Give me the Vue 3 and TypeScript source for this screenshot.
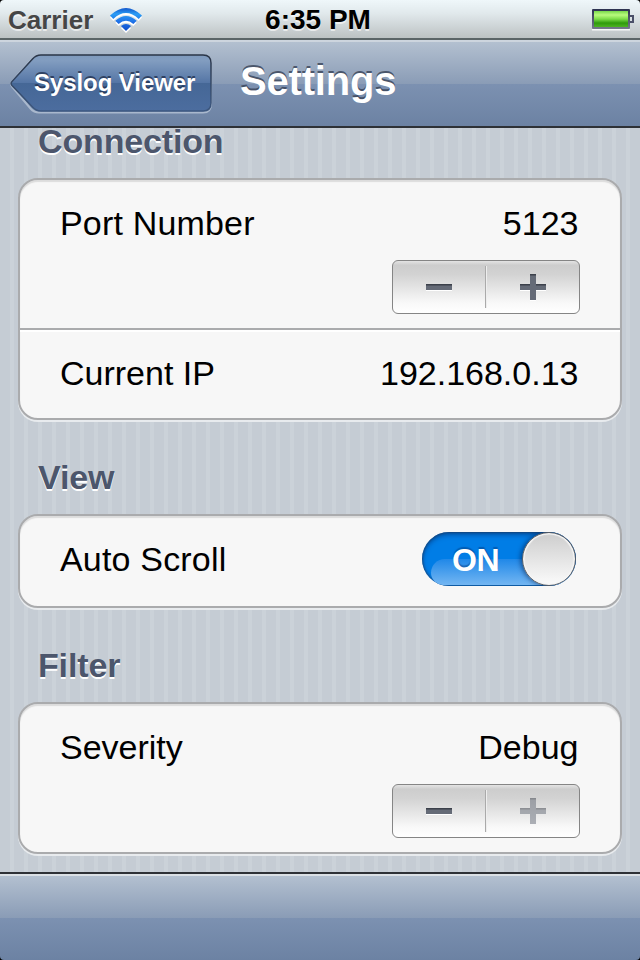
<script setup lang="ts">
import { ref } from 'vue'

const severities = ['Emergency', 'Alert', 'Critical', 'Error', 'Warning', 'Notice', 'Info', 'Debug']
const port = ref<number>(5123)
const severity = ref<number>(severities.length - 1)
const autoScroll = ref<boolean>(true)
const currentIp = '192.168.0.13'

function stepSeverity(delta: number): void {
  severity.value = Math.min(severities.length - 1, Math.max(0, severity.value + delta))
}
</script>

<template>
  <div class="screen">
    <header class="status">
      <div class="status-left">
        <span class="carrier">Carrier</span>
        <svg class="wifi" width="34" height="26" viewBox="0 0 34 26">
          <defs>
            <linearGradient id="wifi-fill" gradientUnits="userSpaceOnUse" x1="0" y1="0" x2="0" y2="24">
              <stop offset="0" stop-color="#1256cc" />
              <stop offset="0.25" stop-color="#2c9df4" />
              <stop offset="0.6" stop-color="#1d6ee6" />
              <stop offset="1" stop-color="#0c49c4" />
            </linearGradient>
          </defs>
          <g fill="#fff" transform="translate(0 2)">
            <path d="M1 7.6Q17-7.6 33 7.6L29.7 10.9Q17-.8 4.3 10.9Z" />
            <path d="M6.3 12.7Q17 3.3 27.7 12.7L24.4 16.1Q17 9.6 9.6 16.1Z" />
            <path d="M11.9 18Q17 13.8 22.1 18L17 23Z" />
          </g>
          <g fill="url(#wifi-fill)">
            <path d="M1 7.6Q17-7.6 33 7.6L29.7 10.9Q17-.8 4.3 10.9Z" />
            <path d="M6.3 12.7Q17 3.3 27.7 12.7L24.4 16.1Q17 9.6 9.6 16.1Z" />
            <path d="M11.9 18Q17 13.8 22.1 18L17 23Z" />
          </g>
        </svg>
      </div>
      <span class="clock">6:35 PM</span>
      <div class="status-right">
        <svg width="43" height="23" viewBox="0 0 43 23">
          <defs>
            <linearGradient id="charge" x1="0" y1="0" x2="0" y2="1">
              <stop offset="0" stop-color="#78d94a" />
              <stop offset="0.25" stop-color="#b9fb7e" />
              <stop offset="0.5" stop-color="#7ddd48" />
              <stop offset="0.75" stop-color="#2f9a0c" />
              <stop offset="1" stop-color="#4db322" />
            </linearGradient>
            <linearGradient id="shell" x1="0" y1="0" x2="0" y2="1">
              <stop offset="0" stop-color="#2c3150" />
              <stop offset="1" stop-color="#75798a" />
            </linearGradient>
          </defs>
          <path d="M0 20h38v1.5H0z" fill="#fff" fill-opacity=".85" />
          <rect width="38" height="20" rx="1" fill="url(#shell)" />
          <rect x="2" y="2" width="34" height="16" fill="url(#charge)" />
          <path d="M38 7h3v6h-3" fill="none" stroke="#4a4f68" stroke-width="2" />
        </svg>
      </div>
    </header>

    <nav class="navbar">
      <button class="back" type="button">
        <svg class="back-shape" width="204" height="62" viewBox="0 0 204 62">
          <defs>
            <linearGradient id="back-fill" x1="0" y1="0" x2="0" y2="1">
              <stop offset="0" stop-color="#7e99bd" />
              <stop offset="0.1" stop-color="#829dc0" />
              <stop offset="0.5" stop-color="#5475a5" />
              <stop offset="0.5" stop-color="#456796" />
              <stop offset="1" stop-color="#4c6d9f" />
            </linearGradient>
            <linearGradient id="back-line" x1="0" y1="0" x2="0" y2="1">
              <stop offset="0" stop-color="#2a3547" />
              <stop offset="1" stop-color="#3d5880" />
            </linearGradient>
          </defs>
          <path d="M27 2.5H193Q201 2.5 201 10.5V50.5Q201 58.5 193 58.5H29Q24 58.5 20.5 54.5L2 32.5Q0 30 2 27.5L20.5 6.5Q24 2.5 29 2.5Z" fill="none" stroke="#a9b8cd" stroke-width="2" />
          <path d="M31 1H193Q201 1 201 9V49Q201 57 193 57H31Q26 57 22.5 53L2 31.5Q.2 29.5 2 27.5L22.5 5Q26 1 31 1Z" fill="url(#back-fill)" stroke="url(#back-line)" stroke-width="1.5" />
        </svg>
        <span class="back-label">Syslog Viewer</span>
      </button>
      <h1 class="title">Settings</h1>
    </nav>

    <main class="content">
      <section class="group">
        <h2>Connection</h2>
        <div class="card">
          <div class="row tall">
            <div class="line"><span class="wide">Port Number</span><span>{{ port }}</span></div>
            <div class="stepper">
              <button type="button" @click="port--">
                <svg width="26" height="28"><path d="M0 12h26v5H0z" fill="#fff" /><path d="M0 10h26v6H0z" fill="#656b77" /><path d="M0 10h26v1.5H0z" fill="#3c414b" /></svg>
              </button>
              <button type="button" @click="port++">
                <svg width="26" height="28"><path d="M0 12h26v5H16v10h-6V17H0z" fill="#fff" /><path d="M10 0h6v10h10v6H16v10h-6V16H0v-6h10z" fill="#656b77" /><path d="M10 0h6v1.5h-6zM0 10h10v1.5H0zM16 10h10v1.5H16z" fill="#3c414b" /></svg>
              </button>
            </div>
          </div>
          <div class="row">
            <div class="line"><span>Current IP</span><span>{{ currentIp }}</span></div>
          </div>
        </div>
      </section>

      <section class="group">
        <h2>View</h2>
        <div class="card">
          <div class="row switch-row">
            <span class="wide">Auto Scroll</span>
            <button class="switch" type="button" @click="autoScroll = !autoScroll">
              <span class="gloss"></span>
              <span class="switch-label">{{ autoScroll ? 'ON' : 'OFF' }}</span>
              <span class="knob"></span>
            </button>
          </div>
        </div>
      </section>

      <section class="group">
        <h2>Filter</h2>
        <div class="card">
          <div class="row tall">
            <div class="line"><span>Severity</span><span>{{ severities[severity] }}</span></div>
            <div class="stepper">
              <button type="button" @click="stepSeverity(-1)">
                <svg width="26" height="28"><path d="M0 12h26v5H0z" fill="#fff" /><path d="M0 10h26v6H0z" fill="#656b77" /><path d="M0 10h26v1.5H0z" fill="#3c414b" /></svg>
              </button>
              <button type="button" :disabled="severity === severities.length - 1" @click="stepSeverity(1)">
                <svg width="26" height="28"><path d="M10 0h6v10h10v6H16v10h-6V16H0v-6h10z" fill="#656b77" /><path d="M10 0h6v1.5h-6zM0 10h10v1.5H0zM16 10h10v1.5H16z" fill="#3c414b" /></svg>
              </button>
            </div>
          </div>
        </div>
      </section>
    </main>

    <footer class="toolbar"></footer>
  </div>
</template>

<style>
body {
  background: #000;
}
</style>

<style scoped>
.screen {
  box-sizing: border-box;
  width: 640px;
  height: 960px;
  display: flex;
  flex-direction: column;
  overflow: hidden;
  border-radius: 4px;
  font-family: "Liberation Sans", Arial, sans-serif;
  color: #000;
}
button {
  padding: 0;
  margin: 0;
  border: 0;
  background: none;
  font-family: inherit;
}
.status {
  box-sizing: border-box;
  height: 40px;
  flex: none;
  display: grid;
  grid-template-columns: 1fr auto 1fr;
  padding: 0 5px 0 8px;
  background: linear-gradient(#eff7fa, #e1e9ec 35%, #bcc2c3 100%);
  border-bottom: 2px solid #5b6567;
}
.status-left {
  display: flex;
  gap: 16px;
}
.carrier {
  font: bold 26px/40px "Liberation Sans", Arial, sans-serif;
  color: #464646;
  text-shadow: 0 2px 0 rgba(255, 255, 255, 0.6);
}
.wifi {
  margin-top: 8px;
}
.clock {
  margin-right: 7px;
  font-size: 28px;
  font-weight: bold;
  line-height: 39px;
  text-shadow: 0 2px 0 rgba(255, 255, 255, 0.6);
}
.status-right {
  display: flex;
  justify-content: flex-end;
  padding-top: 9px;
}
.navbar {
  box-sizing: border-box;
  height: 88px;
  flex: none;
  display: flex;
  align-items: flex-start;
  gap: 28px;
  padding: 12px 10px 0 10px;
  border-top: 2px solid #cdd5de;
  border-bottom: 2px solid #2e3136;
  background: linear-gradient(#b3c0d0, #8a9cb6 50%, #7c91b1 50%, #6c82a3);
}
.back {
  display: grid;
  width: 202px;
  height: 60px;
}
.back-shape,
.back-label {
  grid-area: 1 / 1;
}
.back-label {
  padding-left: 24px;
  text-align: left;
  font-size: 24px;
  font-weight: bold;
  line-height: 57px;
  letter-spacing: -0.07px;
  color: #fff;
  text-shadow: 0 -2px 0 rgba(30, 45, 75, 0.75);
  white-space: nowrap;
}
.title {
  margin: 0;
  font-size: 40px;
  line-height: 54px;
  letter-spacing: -0.2px;
  color: #fff;
  text-shadow: 0 -2px 0 rgba(50, 60, 80, 0.75);
}
.content {
  height: 744px;
  flex: none;
  overflow: hidden;
  background: repeating-linear-gradient(90deg, #c5ccd4 0 10px, #cbd2d9 10px 14px);
}
.group {
  padding: 0 18px 37px;
}
.group:first-child {
  margin-top: -7px;
}
h2 {
  margin: 0 0 17px;
  padding-left: 20px;
  font-size: 34px;
  line-height: 40px;
  letter-spacing: -0.15px;
  color: #4c566c;
  text-shadow: 0 2px 0 #fff;
}
.card {
  border: 2px solid #aaabad;
  border-radius: 20px;
  background: #f7f7f7;
  box-shadow: 0 2px 0 #e8ebee, inset 0 2px 1px #dcdcdc;
}
.row {
  box-sizing: border-box;
  height: 88px;
  padding: 23px 40px 0;
  font-size: 34px;
  line-height: 40px;
}
.row.tall {
  height: 148px;
}
.row + .row {
  height: 90px;
  border-top: 2px solid #aaabad;
  box-shadow: inset 0 2px 0 #fff;
}
.line {
  display: flex;
  justify-content: space-between;
  padding-right: 1.5px;
}
.wide {
  letter-spacing: 0.18px;
}
.stepper {
  box-sizing: border-box;
  display: grid;
  grid-template-columns: 92px 1fr;
  width: 188px;
  height: 54px;
  margin: 17px 0 0 auto;
  padding: 5px 0;
  border: 1px solid #858585;
  border-radius: 6px;
  background: linear-gradient(#e4e4e4 0, #cdcdcd 8%, #d2d2d2 25%, #f8f8f8 80%, #fff);
}
.stepper button {
  display: flex;
  align-items: center;
  justify-content: center;
  padding-top: 2px;
}
.stepper button + button {
  border-left: 1px solid #aaa;
  box-shadow: inset 1px 0 0 #eee;
}
.stepper button:disabled svg {
  opacity: 0.5;
}
.row.switch-row {
  display: flex;
  justify-content: space-between;
  height: 90px;
  padding: 16px 44px 0 40px;
}
.switch-row > span {
  padding-top: 7px;
}
.switch {
  position: relative;
  width: 154px;
  height: 54px;
  overflow: hidden;
  border-radius: 27px;
  background: #007de6;
  box-shadow: inset 0 0 2px 1px rgba(30, 60, 100, 0.65), inset 0 3px 5px rgba(0, 40, 100, 0.5);
}
.gloss {
  position: absolute;
  left: 9px;
  right: 9px;
  top: 27px;
  height: 26px;
  border-radius: 16px 18px 12px 14px;
  background: linear-gradient(#2088e8, #73b6f2);
}
.switch-label {
  position: absolute;
  left: 30px;
  top: 0;
  font-size: 32px;
  font-weight: bold;
  line-height: 56px;
  letter-spacing: -0.5px;
  color: #fff;
  text-shadow: 0 -2px 1px rgba(0, 60, 130, 0.5);
}
.knob {
  position: absolute;
  box-sizing: border-box;
  right: 0;
  top: 0;
  width: 54px;
  height: 54px;
  border: 1.5px solid #5c5f64;
  border-radius: 50%;
  background: linear-gradient(#cdcdcd, #fbfbfb);
  box-shadow: inset 0 0 1px 1.5px #f5f5f5, -2px 0 4px rgba(0, 30, 80, 0.5);
}
.toolbar {
  box-sizing: border-box;
  height: 88px;
  flex: none;
  border-top: 2px solid #2e3136;
  background: linear-gradient(#dbe0e5 2px, #b3c0d0 2px, #8a9cb6 44px, #7c91b1 44px, #6c82a3);
}
</style>
